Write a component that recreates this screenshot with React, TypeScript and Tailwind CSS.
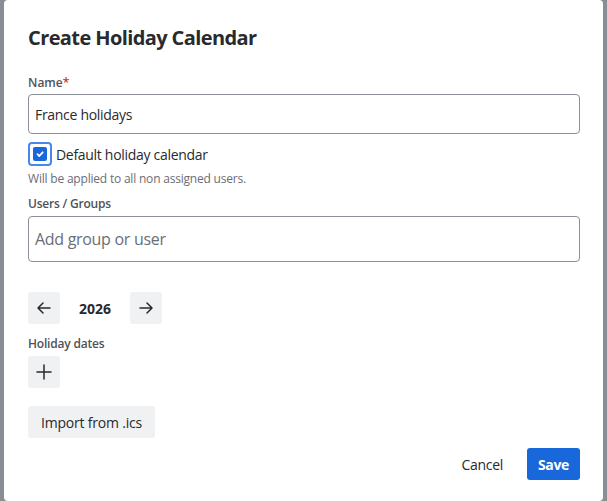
import React from "react";

const ArrowLeft = () => (
  <svg width="16" height="16" viewBox="0 0 16 16" fill="none" stroke="currentColor" strokeWidth="1.5" strokeLinecap="round" strokeLinejoin="round">
    <path d="M14 8H2M7 3 2 8l5 5" />
  </svg>
);

const ArrowRight = () => (
  <svg width="16" height="16" viewBox="0 0 16 16" fill="none" stroke="currentColor" strokeWidth="1.5" strokeLinecap="round" strokeLinejoin="round">
    <path d="M2 8h12M9 3l5 5-5 5" />
  </svg>
);

const Plus = () => (
  <svg width="16" height="16" viewBox="0 0 16 16" fill="none" stroke="currentColor" strokeWidth="1.5" strokeLinecap="round">
    <path d="M8 1v14M1 8h14" />
  </svg>
);

export default function App() {
  return (
    <div
      className="flex h-[501px] w-[607px] bg-[#8b8d94] pl-[4px] pr-[4px]"
      style={{ fontFamily: '"Open Sans", "Noto Sans", sans-serif' }}
    >
      {/* Modal dialog */}
      <div className="flex flex-1 flex-col rounded-[4px] bg-white pl-[24px] pr-[23px] pt-[24px] text-[#292a2e]">
        <h1 className="text-[20px] font-bold leading-[28px] tracking-[-0.6px]">Create Holiday Calendar</h1>

        <div className="mt-[23px] text-[12px] font-semibold leading-[16px] text-[#505258]">
          Name<span className="text-[#c9372c]">*</span>
        </div>
        <div className="mt-[3px] flex h-[40px] items-center rounded-[4px] border border-[#8c8f97] px-[6px] text-[14px] tracking-[-0.3px]">
          France holidays
        </div>

        <label className="mt-[8px] flex items-center gap-[4px] text-[14px] tracking-[-0.3px]">
          <span className="flex h-[24px] w-[24px] items-center justify-center rounded-[4px] border-2 border-[#4688ec]">
            <span className="flex h-[14px] w-[14px] items-center justify-center rounded-[2px] bg-[#1868db]">
              <svg width="10" height="10" viewBox="0 0 10 10" fill="none" stroke="white" strokeWidth="1.8" strokeLinecap="round" strokeLinejoin="round">
                <path d="M2.5 5.2 4.3 7 7.7 3.3" />
              </svg>
            </span>
          </span>
          Default holiday calendar
        </label>
        <div className="mt-[5px] text-[12px] leading-[16px] tracking-[-0.2px] text-[#6b6e76]">
          Will be applied to all non assigned users.
        </div>

        <div className="mt-[9px] text-[12px] font-semibold leading-[16px] tracking-[-0.2px] text-[#505258]">Users / Groups</div>
        <div className="mt-[4px] flex h-[46px] items-center rounded-[4px] border border-[#8c8f97] px-[6px] text-[16px] tracking-[-0.3px] text-[#6b6e76]">
          Add group or user
        </div>

        <div className="mt-[30px] flex items-center">
          <button className="flex h-[32px] w-[32px] items-center justify-center rounded-[3px] bg-[#f0f1f2] text-[#292a2e]">
            <ArrowLeft />
          </button>
          <span className="w-[70px] text-center text-[14px] font-bold">2026</span>
          <button className="flex h-[32px] w-[32px] items-center justify-center rounded-[3px] bg-[#f0f1f2] text-[#292a2e]">
            <ArrowRight />
          </button>
        </div>

        <div className="mt-[12px] text-[12px] font-semibold leading-[16px] tracking-[-0.2px] text-[#505258]">Holiday dates</div>
        <button className="mt-[4px] flex h-[32px] w-[32px] items-center justify-center rounded-[3px] bg-[#f0f1f2] text-[#292a2e]">
          <Plus />
        </button>

        <button className="mt-[18px] h-[32px] self-start rounded-[3px] bg-[#f0f1f2] px-[13px] text-[14px] font-medium tracking-[-0.2px] text-[#292a2e]">
          Import from .ics
        </button>

        <div className="mt-[10px] flex justify-end gap-[12px]">
          <button className="h-[32px] px-[12px] text-[14px] font-medium tracking-[-0.3px] text-[#292a2e]">Cancel</button>
          <button className="h-[32px] w-[53px] rounded-[3px] bg-[#1868db] text-[14px] font-bold tracking-[-0.3px] text-white">Save</button>
        </div>
      </div>
    </div>
  );
}
